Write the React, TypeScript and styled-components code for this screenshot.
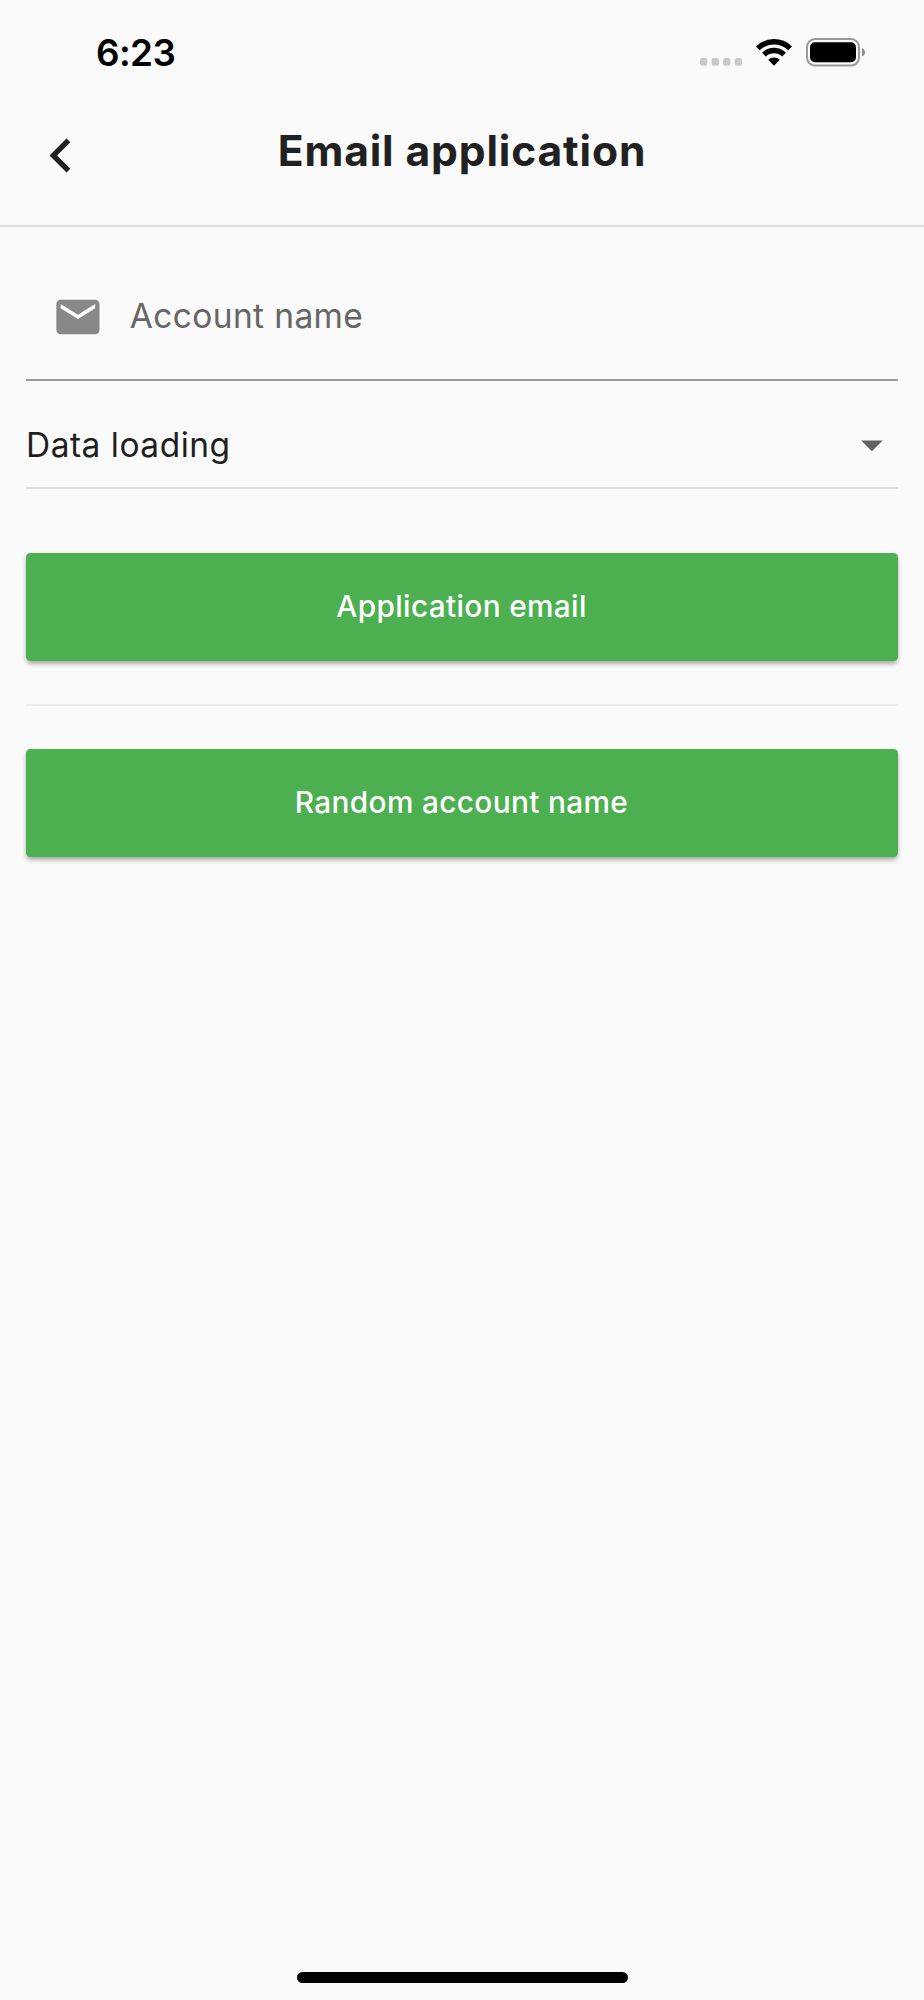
import React from 'react';
import styled, { createGlobalStyle } from 'styled-components';

const GlobalStyle = createGlobalStyle`
  *, *::before, *::after { box-sizing: border-box; }
  body { margin: 0; background: #fafafa; }
  svg { display: block; flex: none; }
`;

const Screen = styled.div`
  display: flex;
  flex-direction: column;
  width: 924px;
  height: 2000px;
  background: #fafafa;
  color: #212121;
  font-family: Inter, 'Liberation Sans', sans-serif;
  overflow: hidden;
`;

const StatusBar = styled.div`
  display: flex;
  justify-content: space-between;
  align-items: center;
  height: 104px;
  padding: 0 58px 0 96px;
`;

const Time = styled.span`
  margin-top: 2px;
  color: #000;
  font-size: 36.8px;
  font-weight: 600;
  line-height: 44px;
  letter-spacing: -0.6px;
`;

const StatusIcons = styled.div`
  display: flex;
  align-items: center;
`;

const AppBar = styled.header`
  display: grid;
  grid-template-columns: 110px 1fr 110px;
  height: 123px;
  border-bottom: 2px solid #dcdcdc;
`;

const BackButton = styled.button`
  display: flex;
  align-items: flex-start;
  padding: 34px 0 0 49px;
  border: 0;
  background: none;
`;

const Title = styled.h1`
  margin: 21px 0 0;
  font-size: 42.6px;
  font-weight: 700;
  line-height: 52px;
  letter-spacing: 0.85px;
  text-align: center;
  white-space: nowrap;
`;

const Form = styled.main`
  display: flex;
  flex: 1;
  flex-direction: column;
  padding: 0 26px;
`;

const AccountField = styled.label`
  display: flex;
  align-items: flex-start;
  gap: 26px;
  height: 154px;
  padding: 64px 0 0 26px;
  border-bottom: 2px solid #9d9d9d;
`;

const Hint = styled.span`
  margin-top: -1px;
  color: #666;
  font-size: 33.5px;
  line-height: 52px;
  letter-spacing: 0.37px;
`;

const SelectField = styled.div`
  display: flex;
  justify-content: space-between;
  height: 108px;
  padding: 39px 0 0;
  border-bottom: 2px solid #dedede;
`;

const SelectValue = styled.span`
  color: #1f1f1f;
  font-size: 33.5px;
  line-height: 50px;
  letter-spacing: 0.5px;
`;

const Caret = styled.svg`
  margin: -1px 0 0;
`;

const Action = styled.button`
  height: 108px;
  padding: 0 1px 2px 0;
  border: 0;
  border-radius: 4.5px;
  background: #4caf50;
  box-shadow: 0 4px 5px -1px rgba(0, 0, 0, 0.22), 0 2px 5px rgba(0, 0, 0, 0.16);
  color: #fff;
  font-family: inherit;
  font-size: 29.8px;
  font-weight: 500;
  letter-spacing: 0.34px;
`;

const Actions = styled.div`
  display: flex;
  flex-direction: column;
  padding-top: 64px;
`;

const Divider = styled.hr`
  width: 100%;
  height: 2px;
  margin: 43px 0;
  border: 0;
  background: #ededed;
`;

const HomeArea = styled.footer`
  display: flex;
  justify-content: center;
  height: 28px;
`;

const HomeBar = styled.div`
  width: 331px;
  height: 11px;
  border-radius: 6px;
  background: #000;
`;

const SignalDots = () => (
  <svg width="42" height="8" viewBox="0 0 42 8" fill="#c8c8c8">
    {[0, 11.6, 23.1, 34.7].map((x) => (
      <rect key={x} x={x} y="0" width="7.3" height="7.8" rx="2.2" />
    ))}
  </svg>
);

const Dots = styled.div`
  margin: 20px 14px 0 0;
`;

const Wifi = styled.svg`
  margin: 0 14px 0 0;
`;

export default function App() {
  return (
    <>
      <GlobalStyle />
      <Screen>
        <StatusBar>
          <Time>6:23</Time>
          <StatusIcons>
            <Dots>
              <SignalDots />
            </Dots>
            <Wifi width="36" height="27" viewBox="0 0 36 27">
              <path d="M1.8 9.4a23.2 23.2 0 0 1 32.4 0" fill="none" stroke="#000" strokeWidth="5.4" />
              <path d="M8 15.6a14.4 14.4 0 0 1 20 0" fill="none" stroke="#000" strokeWidth="5.4" />
              <path d="M18 26.8l-5.8-6a8.4 8.4 0 0 1 11.6 0z" fill="#000" />
            </Wifi>
            <svg width="60" height="29" viewBox="0 0 60 29">
              <rect x="1" y="1" width="52" height="26.6" rx="8" fill="none" stroke="#9a9a9a" strokeWidth="2" />
              <rect x="4" y="4.3" width="46" height="20" rx="5" fill="#000" />
              <path d="M56 10c4 1.6 4 7 0 8.6z" fill="#8d8d8d" />
            </svg>
          </StatusIcons>
        </StatusBar>
        <AppBar>
          <BackButton aria-label="Back">
            <svg width="22" height="35" viewBox="0 0 22 35">
              <path d="M.5 17.5l17-17 3.8 3.8L8.1 17.5l13.2 13.2-3.8 3.8z" fill="#212121" />
            </svg>
          </BackButton>
          <Title>Email application</Title>
        </AppBar>
        <Form>
          <AccountField>
            <svg width="51.8" height="51.8" viewBox="0 0 24 24">
              <path d="M4 4h16a2 2 0 0 1 2 2v12a2 2 0 0 1-2 2H4a2 2 0 0 1-2-2V6a2 2 0 0 1 2-2z" fill="#888" />
              <path d="M20 8l-8 5-8-5V6l8 5 8-5z" fill="#fdfdfd" />
            </svg>
            <Hint>Account name</Hint>
          </AccountField>
          <SelectField>
            <SelectValue>Data loading</SelectValue>
            <Caret width="51.8" height="51.8" viewBox="0 0 24 24">
              <path d="M7 10l5 5 5-5z" fill="#616161" />
            </Caret>
          </SelectField>
          <Actions>
            <Action>Application email</Action>
            <Divider />
            <Action>Random account name</Action>
          </Actions>
        </Form>
        <HomeArea>
          <HomeBar />
        </HomeArea>
      </Screen>
    </>
  );
}
